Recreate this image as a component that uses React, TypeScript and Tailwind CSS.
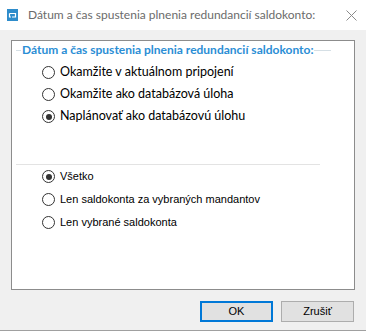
import React from "react";

const font = { fontFamily: 'Lato, "Noto Sans", "Liberation Sans", sans-serif' };
const msFont = { fontFamily: '"Liberation Sans", Arial, sans-serif' };

function Radio({
  label,
  checked,
  h,
  ms,
}: {
  label: string;
  checked?: boolean;
  h: string;
  ms?: boolean;
}) {
  return (
    <div className={`flex items-center pl-[30px] ${h}`}>
      <div className="w-[13px] h-[13px] rounded-full border border-[#333333] bg-white flex items-center justify-center shrink-0">
        {checked && <div className="w-[6px] h-[6px] rounded-full bg-[#333333]" />}
      </div>
      {ms ? (
        <span className="ml-[5px] text-[11px] text-black whitespace-nowrap leading-none" style={msFont}>
          {label}
        </span>
      ) : (
        <span className="ml-[5px] text-[12.5px] text-black whitespace-nowrap leading-none">{label}</span>
      )}
    </div>
  );
}

export default function App() {
  return (
    <div
      className="w-[366px] h-[331px] bg-[#f0f0f0] flex flex-col overflow-hidden"
      style={font}
    >
      <div className="h-[30px] bg-white flex items-center shrink-0">
        <svg width="11" height="12" viewBox="0 0 11 12" className="ml-[7px] mt-[-1px]">
          <rect width="11" height="12" fill="#2e8ccb" />
          <path d="M2.5 4.5 h6 v3.5 h-3.5" fill="none" stroke="#fff" strokeWidth="1.2" />
          <path d="M2.5 4.5 v3.5 h1.5" fill="none" stroke="#fff" strokeWidth="1.2" />
        </svg>
        <span className="ml-[10px] text-[12px] text-[#6b6b6b] whitespace-nowrap">
          Dátum a čas spustenia plnenia redundancií saldokonto:
        </span>
        <svg width="11" height="11" viewBox="0 0 11 11" className="ml-auto mr-[9px]">
          <path d="M0.5 0.5 L10.5 10.5 M10.5 0.5 L0.5 10.5" stroke="#8a8a8a" strokeWidth="1" />
        </svg>
      </div>
      <div className="ml-[11px] mt-[10px] w-[344px] h-[250px] border border-[#8c8c8c] bg-white flex flex-col shrink-0">
        <div className="mt-[1px] h-[16px] flex items-center pl-[4px] pr-[23px]">
          <div className="w-[5px] h-px bg-[#d5dfe5]" />
          <span className="px-[1px] text-[12px] font-bold text-[#2b8ed5] whitespace-nowrap leading-none">
            Dátum a čas spustenia plnenia redundancií saldokonto:
          </span>
          <div className="flex-1 h-px bg-[#d5dfe5]" />
        </div>
        <div className="mt-[3px]">
          <Radio label="Okamžite v aktuálnom pripojení" h="h-[22px]" />
          <Radio label="Okamžite ako databázová úloha" h="h-[22px]" />
          <Radio label="Naplánovať ako databázovú úlohu" checked h="h-[23px]" />
        </div>
        <div className="mt-[36px] ml-[4px] w-[304px] h-px bg-[#e3e3e3]" />
        <div>
          <Radio label="Všetko" checked ms h="h-[23px]" />
          <Radio label="Len saldokonta za vybraných mandantov" ms h="h-[23px]" />
          <Radio label="Len vybrané saldokonta" ms h="h-[23px]" />
        </div>
      </div>
      <div className="mt-[11px] flex justify-end gap-[8px] pr-[12px] shrink-0" style={msFont}>
        <button className="w-[73px] h-[21px] border-2 border-[#0078d7] bg-[#e1e1e1] text-[11px] text-black leading-none">
          OK
        </button>
        <button className="w-[73px] h-[21px] border border-[#adadad] bg-[#e1e1e1] text-[11px] text-black leading-none">
          Zrušiť
        </button>
      </div>
      <div className="mt-auto h-px bg-[#a0a0a0] shrink-0" />
    </div>
  );
}
